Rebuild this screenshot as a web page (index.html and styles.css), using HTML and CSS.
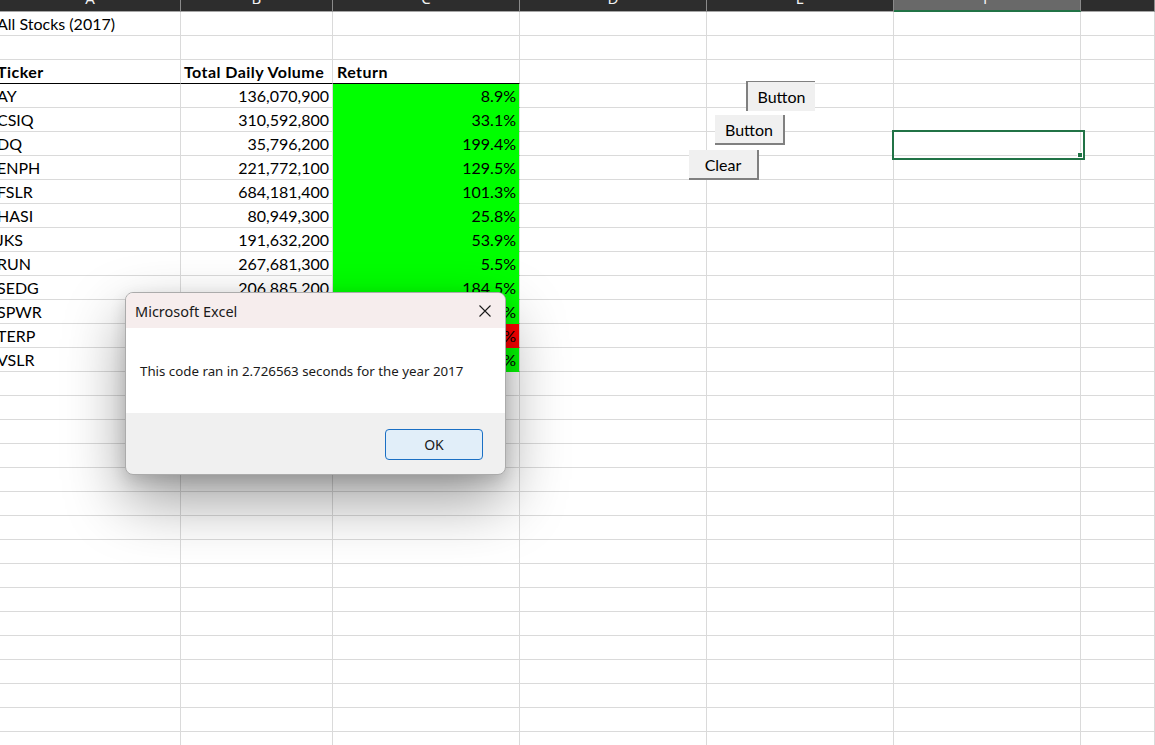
FILE: index.html
```html
<!DOCTYPE html>
<html>
<head>
<meta charset="utf-8">
<link rel="stylesheet" href="styles.css">
</head>
<body>
<div class="sheet">
  <div class="row hdr">
    <div><span>A</span></div><div><span>B</span></div><div><span>C</span></div><div><span>D</span></div><div><span>E</span></div><div class="on"><span>F</span></div><div></div>
  </div>
  <div class="row"><div class="a">All Stocks (2017)</div><div></div><div></div><div></div><div></div><div></div><div></div></div>
  <div class="row"><div></div><div></div><div></div><div></div><div></div><div></div><div></div></div>
  <div class="row"><div class="a b th">Ticker</div><div class="b th">Total Daily Volume</div><div class="b th ret">Return</div><div></div><div></div><div></div><div></div></div>
  <div class="row"><div class="a">AY</div><div class="r">136,070,900</div><div class="r g">8.9%</div><div></div><div></div><div></div><div></div></div>
  <div class="row"><div class="a">CSIQ</div><div class="r">310,592,800</div><div class="r g">33.1%</div><div></div><div></div><div></div><div></div></div>
  <div class="row"><div class="a">DQ</div><div class="r">35,796,200</div><div class="r g">199.4%</div><div></div><div></div><div class="sel"><i class="handle"></i></div><div></div></div>
  <div class="row"><div class="a">ENPH</div><div class="r">221,772,100</div><div class="r g">129.5%</div><div></div><div></div><div></div><div></div></div>
  <div class="row"><div class="a">FSLR</div><div class="r">684,181,400</div><div class="r g">101.3%</div><div></div><div></div><div></div><div></div></div>
  <div class="row"><div class="a">HASI</div><div class="r">80,949,300</div><div class="r g">25.8%</div><div></div><div></div><div></div><div></div></div>
  <div class="row"><div class="a">JKS</div><div class="r">191,632,200</div><div class="r g">53.9%</div><div></div><div></div><div></div><div></div></div>
  <div class="row"><div class="a">RUN</div><div class="r">267,681,300</div><div class="r g">5.5%</div><div></div><div></div><div></div><div></div></div>
  <div class="row"><div class="a">SEDG</div><div class="r">206,885,200</div><div class="r g">184.5%</div><div></div><div></div><div></div><div></div></div>
  <div class="row"><div class="a">SPWR</div><div class="r">782,187,000</div><div class="r g">23.1%</div><div></div><div></div><div></div><div></div></div>
  <div class="row"><div class="a">TERP</div><div class="r">139,402,800</div><div class="r red">-7.2%</div><div></div><div></div><div></div><div></div></div>
  <div class="row"><div class="a">VSLR</div><div class="r">136,942,200</div><div class="r g">-3.5%</div><div></div><div></div><div></div><div></div></div>
  <div class="row"><div></div><div></div><div></div><div></div><div></div><div></div><div></div></div>
  <div class="row"><div></div><div></div><div></div><div></div><div></div><div></div><div></div></div>
  <div class="row"><div></div><div></div><div></div><div></div><div></div><div></div><div></div></div>
  <div class="row"><div></div><div></div><div></div><div></div><div></div><div></div><div></div></div>
  <div class="row"><div></div><div></div><div></div><div></div><div></div><div></div><div></div></div>
  <div class="row"><div></div><div></div><div></div><div></div><div></div><div></div><div></div></div>
  <div class="row"><div></div><div></div><div></div><div></div><div></div><div></div><div></div></div>
  <div class="row"><div></div><div></div><div></div><div></div><div></div><div></div><div></div></div>
  <div class="row"><div></div><div></div><div></div><div></div><div></div><div></div><div></div></div>
  <div class="row"><div></div><div></div><div></div><div></div><div></div><div></div><div></div></div>
  <div class="row"><div></div><div></div><div></div><div></div><div></div><div></div><div></div></div>
  <div class="row"><div></div><div></div><div></div><div></div><div></div><div></div><div></div></div>
  <div class="row"><div></div><div></div><div></div><div></div><div></div><div></div><div></div></div>
  <div class="row"><div></div><div></div><div></div><div></div><div></div><div></div><div></div></div>
  <div class="row"><div></div><div></div><div></div><div></div><div></div><div></div><div></div></div>
  <div class="row"><div></div><div></div><div></div><div></div><div></div><div></div><div></div></div>
</div>

<button class="btn btn1">Button</button>
<button class="btn btn2">Button</button>
<button class="btn btn3">Clear</button>

<div class="dlg">
  <div class="dlg-title">
    <span>Microsoft Excel</span>
    <svg class="x" width="12" height="12" viewBox="0 0 12 12"><path d="M0.5 0.5L11.5 11.5M11.5 0.5L0.5 11.5" stroke="#1b1b1b" stroke-width="1.1" fill="none"/></svg>
  </div>
  <div class="dlg-body">This code ran in 2.726563 seconds for the year 2017</div>
  <div class="dlg-foot"><button class="ok">OK</button></div>
</div>
</body>
</html>
```
FILE: styles.css
```css
* { box-sizing: border-box; }
html, body { margin: 0; padding: 0; background: #fff; overflow: hidden; }
body {
  width: 1155px;
  height: 745px;
  position: relative;
  font-family: Lato, "Liberation Sans", sans-serif;
}

.sheet { display: flex; flex-direction: column; }

.row {
  display: grid;
  grid-template-columns: 181px 152px 187px 187px 187px 187px 1fr;
  height: 24px;
  flex: none;
}
.row > * {
  border-right: 1px solid #dadada;
  border-bottom: 1px solid #dadada;
  font-size: 16px;
  line-height: 23px;
  white-space: nowrap;
  overflow: hidden;
  color: #000;
  padding: 0 3px;
}

.hdr { height: 12px; }
.hdr > * {
  background: #2d2d2d;
  border-right: 1px solid #8a8a8a;
  border-bottom: 1px solid #a6a6a6;
  color: #f2f2f2;
  text-align: center;
  font-family: "Noto Sans", sans-serif;
  font-size: 15px;
  line-height: 15px;
  padding: 0;
}
.hdr span { display: block; margin-top: -9px; }
.hdr .on { background: #696969; border-bottom: 2px solid #217346; }

.a { padding-left: 0; text-indent: -3px; }
.r { text-align: right; }
.b { font-weight: 700; letter-spacing: 0.45px; }
.ret { padding-left: 4px; }
.th { border-bottom-color: #000; }
.g { background: #00ff00; border-bottom-color: #00ff00; }
.red { background: #ff0000; border-bottom-color: #ff0000; }

.sel { position: relative; overflow: visible; }
.sel::after {
  content: "";
  position: absolute;
  left: -2px;
  top: -2px;
  width: 189px;
  height: 26px;
  border: 2px solid #217346;
}
.handle {
  position: absolute;
  left: 183px;
  top: 20px;
  width: 6px;
  height: 6px;
  background: #217346;
  border: 1px solid #fff;
  z-index: 2;
}

.btn {
  position: absolute;
  margin: 0;
  padding: 0;
  background: #f0f0f0;
  border: none;
  font-family: Lato, "Liberation Sans", sans-serif;
  font-size: 16px;
  color: #000;
  display: flex;
  align-items: center;
  justify-content: center;
}
.btn1 {
  left: 746px; top: 81px; width: 69px; height: 30px;
  border-top: 1px solid #808080;
  border-left: 2px solid #808080;
}
.btn2 {
  left: 715px; top: 115px; width: 70px; height: 30px;
  border-right: 2px solid #808080;
  border-bottom: 2px solid #808080;
}
.btn3 {
  left: 689px; top: 150px; width: 70px; height: 30px;
  border-right: 2px solid #808080;
  border-bottom: 2px solid #808080;
}

.dlg {
  position: absolute;
  left: 125px;
  top: 292px;
  width: 381px;
  height: 183px;
  border: 1px solid #ababab;
  border-radius: 8px;
  overflow: hidden;
  display: flex;
  flex-direction: column;
  background: #f0f0f0;
  box-shadow: 0 26px 60px rgba(0,0,0,.38), 0 6px 16px rgba(0,0,0,.14);
  font-family: "Noto Sans", sans-serif;
  color: #1a1a1a;
}
.dlg-title {
  height: 35px;
  flex: none;
  background: #f6eded;
  display: flex;
  align-items: center;
  justify-content: space-between;
  padding: 0 14px 0 9px;
  font-size: 14.5px;
}
.x { display: block; }
.dlg-body {
  height: 85px;
  flex: none;
  background: #fff;
  display: flex;
  align-items: center;
  padding-left: 14px;
  font-size: 13.3px;
}
.dlg-foot {
  flex: 1;
  display: flex;
  justify-content: flex-end;
  align-items: flex-start;
  padding: 16px 22px 0 0;
}
.ok {
  width: 98px;
  height: 31px;
  margin: 0;
  border: 1px solid #1a6fc4;
  border-radius: 4px;
  background: #e1eef9;
  font-family: "Noto Sans", sans-serif;
  font-size: 14px;
  color: #1a1a1a;
}
```
